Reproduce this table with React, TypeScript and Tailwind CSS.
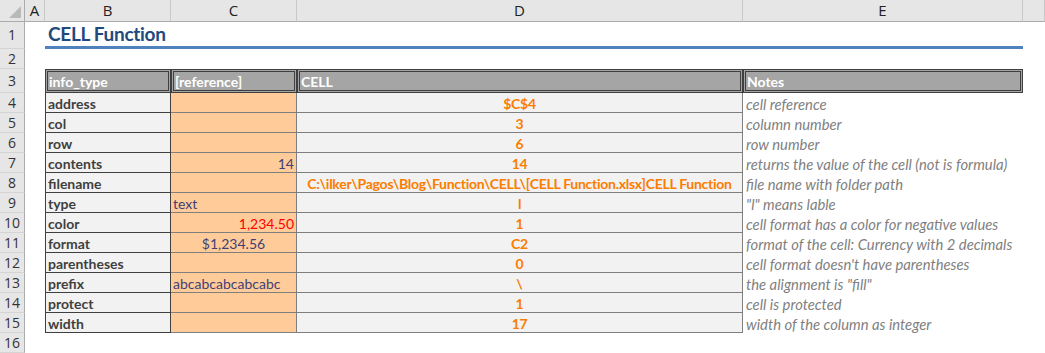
import React from 'react';

type Row = {
  info: string;
  ref?: string;
  refAlign?: 'left' | 'right' | 'center';
  refRed?: boolean;
  cell: string;
  note: string;
};

const rows: Row[] = [
  { info: 'address', cell: '$C$4', note: 'cell reference' },
  { info: 'col', cell: '3', note: 'column number' },
  { info: 'row', cell: '6', note: 'row number' },
  { info: 'contents', ref: '14', refAlign: 'right', cell: '14', note: 'returns the value of the cell (not is formula)' },
  { info: 'filename', cell: 'C:\\ilker\\Pagos\\Blog\\Function\\CELL\\[CELL Function.xlsx]CELL Function', note: 'file name with folder path' },
  { info: 'type', ref: 'text', refAlign: 'left', cell: 'l', note: '"l" means lable' },
  { info: 'color', ref: '1,234.50', refAlign: 'right', refRed: true, cell: '1', note: 'cell format has a color for negative values' },
  { info: 'format', ref: '$1,234.56', refAlign: 'center', cell: 'C2', note: 'format of the cell: Currency with 2 decimals' },
  { info: 'parentheses', cell: '0', note: "cell format doesn't have parentheses" },
  { info: 'prefix', ref: 'abcabcabcabcabc', refAlign: 'left', cell: '\\', note: 'the alignment is "fill"' },
  { info: 'protect', cell: '1', note: 'cell is protected' },
  { info: 'width', cell: '17', note: 'width of the column as integer' },
];

const letters = ['A', 'B', 'C', 'D', 'E', ''];

function RowNum({ n }: { n: number }) {
  return (
    <div className="flex items-center justify-center bg-[#e6e6e6] border-r border-b border-r-[#ababab] border-b-[#d4d4d4] text-[14px] leading-none text-[#333] font-['Open_Sans',sans-serif]">
      {n}
    </div>
  );
}

export default function App() {
  const alignCls = (a?: string) =>
    a === 'right' ? 'justify-end pr-[2px]' : a === 'center' ? 'justify-center' : 'justify-start pl-[2px]';

  return (
    <div className="w-[1045px] h-[353px] overflow-hidden bg-white font-['Lato',sans-serif]">
      <div className="grid grid-cols-[25px_20px_126px_126px_446px_280px_1fr] grid-rows-[22px_27px_20px_24px_repeat(13,20px)]">
        {/* column headers */}
        <div className="relative bg-[#e6e6e6] border-r border-b border-r-[#ababab] border-b-[#ababab]">
          <div className="absolute right-[3px] bottom-[3px] w-0 h-0 border-l-[12px] border-l-transparent border-b-[12px] border-b-[#b9b9b9]" />
        </div>
        {letters.map((l, i) => (
          <div
            key={i}
            className="flex items-center justify-center bg-[#e6e6e6] border-r border-b border-r-[#c8c8c8] border-b-[#ababab] text-[15px] leading-none text-[#222] font-['Open_Sans',sans-serif]"
          >
            {l}
          </div>
        ))}

        {/* row 1 */}
        <RowNum n={1} />
        <div />
        <div className="col-span-4 flex items-end pl-[3px] pb-[3px] border-b-[3px] border-[#4f81bd] text-[19px] leading-none font-bold text-[#1f497d] tracking-[-0.3px]">
          CELL Function
        </div>
        <div />

        {/* row 2 */}
        <RowNum n={2} />
        <div className="col-span-6" />

        {/* row 3 header */}
        <RowNum n={3} />
        <div />
        {['info_type', '[reference]', 'CELL', 'Notes'].map((h) => (
          <div
            key={h}
            className="flex items-center pl-[1px] bg-[#a5a5a5] border-[3px] border-double border-[#3f3f3f] text-white font-bold text-[14px]"
          >
            {h}
          </div>
        ))}
        <div />

        {/* body */}
        {rows.map((r, i) => (
          <React.Fragment key={r.info}>
            <RowNum n={i + 4} />
            <div />
            <div className="flex items-center pl-[2px] pt-[2px] bg-[#f2f2f2] border-l border-r border-b border-[#3f3f3f] text-[#3f3f3f] font-bold text-[14px] leading-none">
              {r.info}
            </div>
            <div
              className={`flex items-center pt-[2px] bg-[#ffcc99] border-r border-b border-[#7f7f7f] text-[14px] leading-none ${alignCls(r.refAlign)} ${r.refRed ? 'text-[#ff0000]' : 'text-[#3f3f76]'}`}
            >
              {r.ref ?? ''}
            </div>
            <div className="flex items-center justify-center pt-[2px] bg-[#f2f2f2] border-r border-b border-[#7f7f7f] text-[#fa7d00] font-bold text-[14px] leading-none tracking-[-0.27px] whitespace-nowrap">
              {r.cell}
            </div>
            <div className="flex items-center pl-[3px] pt-[2px] italic text-[#7f7f7f] text-[14.8px] leading-none whitespace-nowrap">
              {r.note}
            </div>
            <div />
          </React.Fragment>
        ))}

        {/* row 16 */}
        <RowNum n={16} />
        <div className="col-span-6" />
      </div>
    </div>
  );
}
